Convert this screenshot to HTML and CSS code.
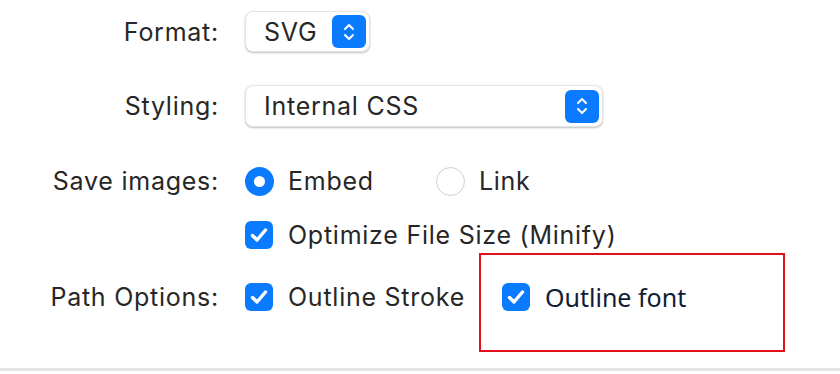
FILE: index.html
```html
<!DOCTYPE html>
<html lang="en">
<head>
    <meta charset="UTF-8">
    <meta name="viewport" content="width=device-width, initial-scale=1.0">
    <title>Export Options</title>
    <link rel="stylesheet" href="styles.css">
</head>
<body>
    <div class="panel">
        <div class="row row-format">
            <span class="label">Format:</span>
            <div class="select select-small">
                <span class="value">SVG</span>
                <span class="stepper">
                    <svg width="14" height="22" viewBox="0 0 14 22"><path d="M3 8 L7 4 L11 8 M3 14 L7 18 L11 14" fill="none" stroke="#fff" stroke-width="2" stroke-linecap="round" stroke-linejoin="round"/></svg>
                </span>
            </div>
        </div>

        <div class="row row-styling">
            <span class="label">Styling:</span>
            <div class="select select-wide">
                <span class="value">Internal CSS</span>
                <span class="stepper">
                    <svg width="14" height="22" viewBox="0 0 14 22"><path d="M3 8 L7 4 L11 8 M3 14 L7 18 L11 14" fill="none" stroke="#fff" stroke-width="2" stroke-linecap="round" stroke-linejoin="round"/></svg>
                </span>
            </div>
        </div>

        <div class="row row-images">
            <span class="label">Save images:</span>
            <div class="options">
                <label class="option">
                    <span class="radio checked"></span>
                    Embed
                </label>
                <label class="option option-link">
                    <span class="radio"></span>
                    Link
                </label>
            </div>
        </div>

        <div class="row row-minify">
            <span class="label"></span>
            <label class="option">
                <span class="check">
                    <svg width="28" height="28" viewBox="0 0 28 28"><path d="M7.5 14.5 L12 19 L20.5 9" fill="none" stroke="#fff" stroke-width="3.4" stroke-linecap="round" stroke-linejoin="round"/></svg>
                </span>
                Optimize File Size (Minify)
            </label>
        </div>

        <div class="row row-path">
            <span class="label">Path Options:</span>
            <label class="option">
                <span class="check">
                    <svg width="28" height="28" viewBox="0 0 28 28"><path d="M7.5 14.5 L12 19 L20.5 9" fill="none" stroke="#fff" stroke-width="3.4" stroke-linecap="round" stroke-linejoin="round"/></svg>
                </span>
                Outline Stroke
            </label>
            <div class="highlight">
                <label class="option option-font">
                    <span class="check">
                        <svg width="28" height="28" viewBox="0 0 28 28"><path d="M7.5 14.5 L12 19 L20.5 9" fill="none" stroke="#fff" stroke-width="3.4" stroke-linecap="round" stroke-linejoin="round"/></svg>
                    </span>
                    Outline font
                </label>
            </div>
        </div>
    </div>
</body>
</html>
```

FILE: styles.css
```css
body {
    margin: 0;
    background: #fff;
    font-family: Inter, "Liberation Sans", sans-serif;
    font-size: 25px;
    letter-spacing: 0.75px;
    color: #272727;
}

.panel {
    height: 371px;
    box-sizing: border-box;
    padding-top: 11px;
    border-bottom: 3px solid #e6e6e6;
}

.row {
    display: flex;
    align-items: center;
}

.label {
    width: 219px;
    flex-shrink: 0;
    text-align: right;
    margin-right: 26px;
}

.row-styling {
    margin-top: 33px;
}

.row-images {
    margin-top: 39px;
}

.row-minify {
    margin-top: 24px;
}

.row-path {
    margin-top: 32px;
    align-items: flex-start;
}

.row-path .label {
    line-height: 30px;
}

/* popup selects */
.select {
    display: flex;
    align-items: center;
    justify-content: space-between;
    box-sizing: border-box;
    height: 41px;
    padding: 0 3px 0 18px;
    background: #fff;
    border: 1px solid #e4e4e4;
    border-radius: 8px;
    box-shadow: 0 1px 2px rgba(0, 0, 0, 0.25);
}

.select-small {
    width: 125px;
}

.select-wide {
    width: 358px;
    height: 42px;
}

.stepper {
    display: flex;
    align-items: center;
    justify-content: center;
    width: 34px;
    height: 33px;
    border-radius: 6px;
    background: #0a7bff;
}

/* radios and checkboxes */
.options {
    display: flex;
    align-items: center;
}

.option {
    display: flex;
    align-items: center;
    line-height: 30px;
}

.option-link {
    margin-left: 62px;
}

.radio {
    width: 29px;
    height: 29px;
    box-sizing: border-box;
    border-radius: 50%;
    margin-right: 14px;
    border: 1.5px solid #cfcfcf;
    background: #fff;
    position: relative;
}

.radio.checked {
    border: none;
    background: #0a7bff;
}

.radio.checked::after {
    content: "";
    position: absolute;
    left: 9px;
    top: 9px;
    width: 11px;
    height: 11px;
    border-radius: 50%;
    background: #fff;
}

.check {
    display: flex;
    width: 28px;
    height: 28px;
    border-radius: 6px;
    background: #0a7bff;
    margin-right: 15px;
}

.highlight {
    margin-left: 14px;
    margin-top: -29px;
    width: 306px;
    height: 99px;
    box-sizing: border-box;
    border: 2px solid #e2101c;
    padding: 27px 0 0 21px;
}

.option-font {
    font-family: "Noto Sans", sans-serif;
    font-size: 25px;
    letter-spacing: 0;
    color: #0f1c36;
}
```
